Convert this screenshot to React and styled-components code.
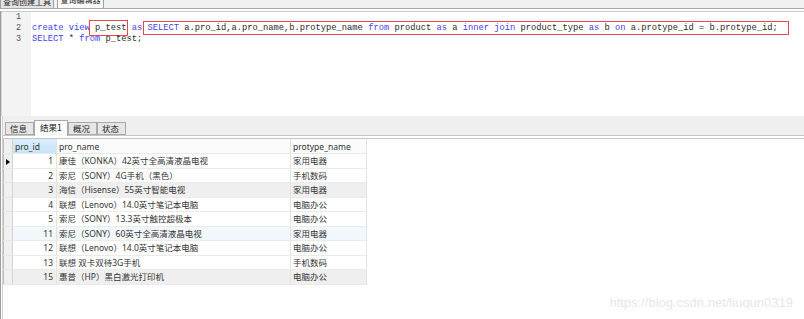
import styled, { createGlobalStyle } from 'styled-components';

const GlobalStyle = createGlobalStyle`
  html, body { margin: 0; padding: 0; background: #fff; }
  body { font-family: "Noto Sans", "Noto Sans CJK SC", sans-serif; }
`;

const rows = [
  { id: 1, name: '康佳（KONKA）42英寸全高清液晶电视', type: '家用电器', current: true },
  { id: 2, name: '索尼（SONY）4G手机（黑色）', type: '手机数码' },
  { id: 3, name: '海信（Hisense）55英寸智能电视', type: '家用电器', tone: 'gray' },
  { id: 4, name: '联想（Lenovo）14.0英寸笔记本电脑', type: '电脑办公' },
  { id: 5, name: '索尼（SONY）13.3英寸触控超极本', type: '电脑办公' },
  { id: 11, name: '索尼（SONY）60英寸全高清液晶电视', type: '家用电器', tone: 'blue' },
  { id: 12, name: '联想（Lenovo）14.0英寸笔记本电脑', type: '电脑办公' },
  { id: 13, name: '联想 双卡双待3G手机', type: '手机数码' },
  { id: 15, name: '惠普（HP）黑白激光打印机', type: '电脑办公', tone: 'gray' },
];

export default function App() {
  return (
    <Page>
      <GlobalStyle />
      <TopTabs>
        <TopTab>查询创建工具</TopTab>
        <TopTab $active>查询编辑器</TopTab>
      </TopTabs>
      <Body>
        <Editor>
          <Gutter>
            <LineNo>1</LineNo>
            <LineNo>2</LineNo>
            <LineNo>3</LineNo>
          </Gutter>
          <Code>
            <CodeLine>&nbsp;</CodeLine>
            <CodeLine>
              <Kw>create view</Kw>
              <Mark $wide={false}> p_test</Mark> <Kw>as</Kw>{' '}
              <Mark $wide>
                <Kw>SELECT</Kw> a.pro_id,a.pro_name,b.protype_name <Kw>from</Kw> product <Kw>as</Kw> a{' '}
                <Kw>inner join</Kw> product_type <Kw>as</Kw> b <Kw>on</Kw> a.protype_id = b.protype_id;
              </Mark>
            </CodeLine>
            <CodeLine>
              <Kw>SELECT</Kw> * <Kw>from</Kw> p_test;
            </CodeLine>
          </Code>
        </Editor>
        <ResultTabs>
          <ResultTab>信息</ResultTab>
          <ResultTab $active>结果1</ResultTab>
          <ResultTab>概况</ResultTab>
          <ResultTab>状态</ResultTab>
        </ResultTabs>
        <GridArea>
          <Grid>
            <colgroup>
              <col style={{ width: 9 }} />
              <col style={{ width: 44 }} />
              <col style={{ width: 234 }} />
              <col style={{ width: 76 }} />
            </colgroup>
            <thead>
              <tr>
                <Indicator as="th" />
                <HeadCell $selected>pro_id</HeadCell>
                <HeadCell>pro_name</HeadCell>
                <HeadCell>protype_name</HeadCell>
              </tr>
            </thead>
            <tbody>
              {rows.map((r) => (
                <Row key={r.id} $tone={r.tone}>
                  <Indicator>{r.current && <Arrow />}</Indicator>
                  <Cell $num>{r.id}</Cell>
                  <Cell>{r.name}</Cell>
                  <Cell>{r.type}</Cell>
                </Row>
              ))}
            </tbody>
          </Grid>
        </GridArea>
      </Body>
      <Watermark>https://blog.csdn.net/liuqun0319</Watermark>
    </Page>
  );
}

const Page = styled.div`
  position: relative;
  width: 804px;
  height: 319px;
  overflow: hidden;
  display: flex;
  flex-direction: column;
  background: #fff;
`;

const TopTabs = styled.div`
  height: 8px;
  display: flex;
  align-items: flex-end;
  gap: 3px;
  background: #f0f0f0;
  border-bottom: 1px solid #a9a9a9;
  margin-bottom: 2px;
  overflow: hidden;
`;

const TopTab = styled.div`
  height: ${(p) => (p.$active ? 14 : 12)}px;
  width: ${(p) => (p.$active ? 47 : 54)}px;
  box-sizing: border-box;
  border: 1px solid #9f9f9f;
  border-bottom: none;
  background: ${(p) => (p.$active ? '#fbfbfb' : '#e3e3e3')};
  font-family: "Noto Sans CJK SC", sans-serif;
  font-size: 8px;
  line-height: 8px;
  color: #222;
  text-align: center;
  margin-bottom: -1px;
`;

const Body = styled.div`
  flex: 1;
  display: flex;
  flex-direction: column;
  border-left: 1px solid #9d9d9d;
  box-shadow: inset 1px 0 0 #fff, inset 2px 0 0 #cfcfcf;
  padding-left: 2px;
`;

const Editor = styled.div`
  height: 104px;
  display: flex;
  border-top: 1px solid #c9c9c9;
  margin-left: -2px;
`;

const Gutter = styled.div`
  width: 30px;
  box-sizing: border-box;
  background: #f3f3f3;
  padding-left: 2px;
  border-left: 1px solid #d6d6d6;
`;

const LineNo = styled.div`
  height: 11px;
  line-height: 11px;
  font-family: "Liberation Mono", monospace;
  font-size: 8.5px;
  color: #555;
  text-align: right;
  padding-right: 10px;
`;

const Code = styled.div`
  flex: 1;
  padding-left: 1px;
`;

const CodeLine = styled.div`
  height: 11px;
  line-height: 11px;
  font-family: "Liberation Mono", monospace;
  font-size: 8.75px;
  color: #2a2a2a;
  white-space: pre;
`;

const Kw = styled.span`
  color: #4343f2;
`;

const Mark = styled.span`
  border: 1px solid #e5484d;
  padding: ${(p) => (p.$wide ? '1px 10px 1px 4px' : '2px 0')};
  margin: ${(p) => (p.$wide ? '0 -11px 0 -5px' : '0 -1px')};
`;

const ResultTabs = styled.div`
  height: 19px;
  display: flex;
  align-items: flex-end;
  padding-left: 2px;
  background: #efefef;
  border-bottom: 1px solid #c6c6c6;
  margin-bottom: 2px;
`;

const ResultTab = styled.div`
  box-sizing: border-box;
  height: ${(p) => (p.$active ? 16 : 13)}px;
  width: ${(p) => (p.$active ? 34 : 29)}px;
  margin-bottom: ${(p) => (p.$active ? -1 : 0)}px;
  border: 1px solid #a9a9a9;
  border-bottom: ${(p) => (p.$active ? 'none' : '1px solid #a9a9a9')};
  background: ${(p) => (p.$active ? '#fafafa' : '#e6e6e6')};
  font-family: "Noto Sans CJK SC", sans-serif;
  font-size: 8.5px;
  line-height: ${(p) => (p.$active ? 13 : 11)}px;
  color: #222;
  padding-left: ${(p) => (p.$active ? 5 : 4)}px;
`;

const GridArea = styled.div`
  flex: 1;
  border-top: 1px solid #c4c4c4;
`;

const Grid = styled.table`
  table-layout: fixed;
  border-collapse: collapse;
  width: 363px;
  border-left: 1px solid #bdbdbd;
  font-size: 8.5px;
  color: #333;
`;

const HeadCell = styled.th`
  height: 14px;
  padding: 0 0 0 2px;
  text-align: left;
  font-weight: normal;
  white-space: nowrap;
  overflow: hidden;
  background: ${(p) => (p.$selected ? 'linear-gradient(#d9eefb, #c6e4f7)' : '#fbfbfb')};
  border-right: 1px solid #e3e3e3;
  border-bottom: 1px solid #e9e9e9;
`;

const Row = styled.tr`
  height: 14.5px;
  background: ${(p) => (p.$tone === 'gray' ? '#efefef' : p.$tone === 'blue' ? '#f2f7fc' : '#fff')};
`;

const Indicator = styled.td`
  padding: 0;
  background: #f0f0f0;
  border-right: 1px solid #d3d3d3;
  border-bottom: 1px solid #e6e6e6;
  text-align: center;
`;

const Arrow = styled.span`
  display: inline-block;
  width: 0;
  height: 0;
  border-top: 3.5px solid transparent;
  border-bottom: 3.5px solid transparent;
  border-left: 4px solid #000;
  vertical-align: middle;
`;

const Cell = styled.td`
  padding: 0 ${(p) => (p.$num ? '3px' : '0')} 0 ${(p) => (p.$num ? '0' : '2px')};
  text-align: ${(p) => (p.$num ? 'right' : 'left')};
  white-space: nowrap;
  overflow: hidden;
  line-height: 13px;
  border-right: 1px solid #e3e3e3;
  border-bottom: 1px solid #ebebeb;
`;

const Watermark = styled.div`
  position: absolute;
  right: 11px;
  bottom: 9px;
  font-family: "Liberation Sans", sans-serif;
  font-size: 13px;
  color: #e7e7e7;
  pointer-events: none;
`;
